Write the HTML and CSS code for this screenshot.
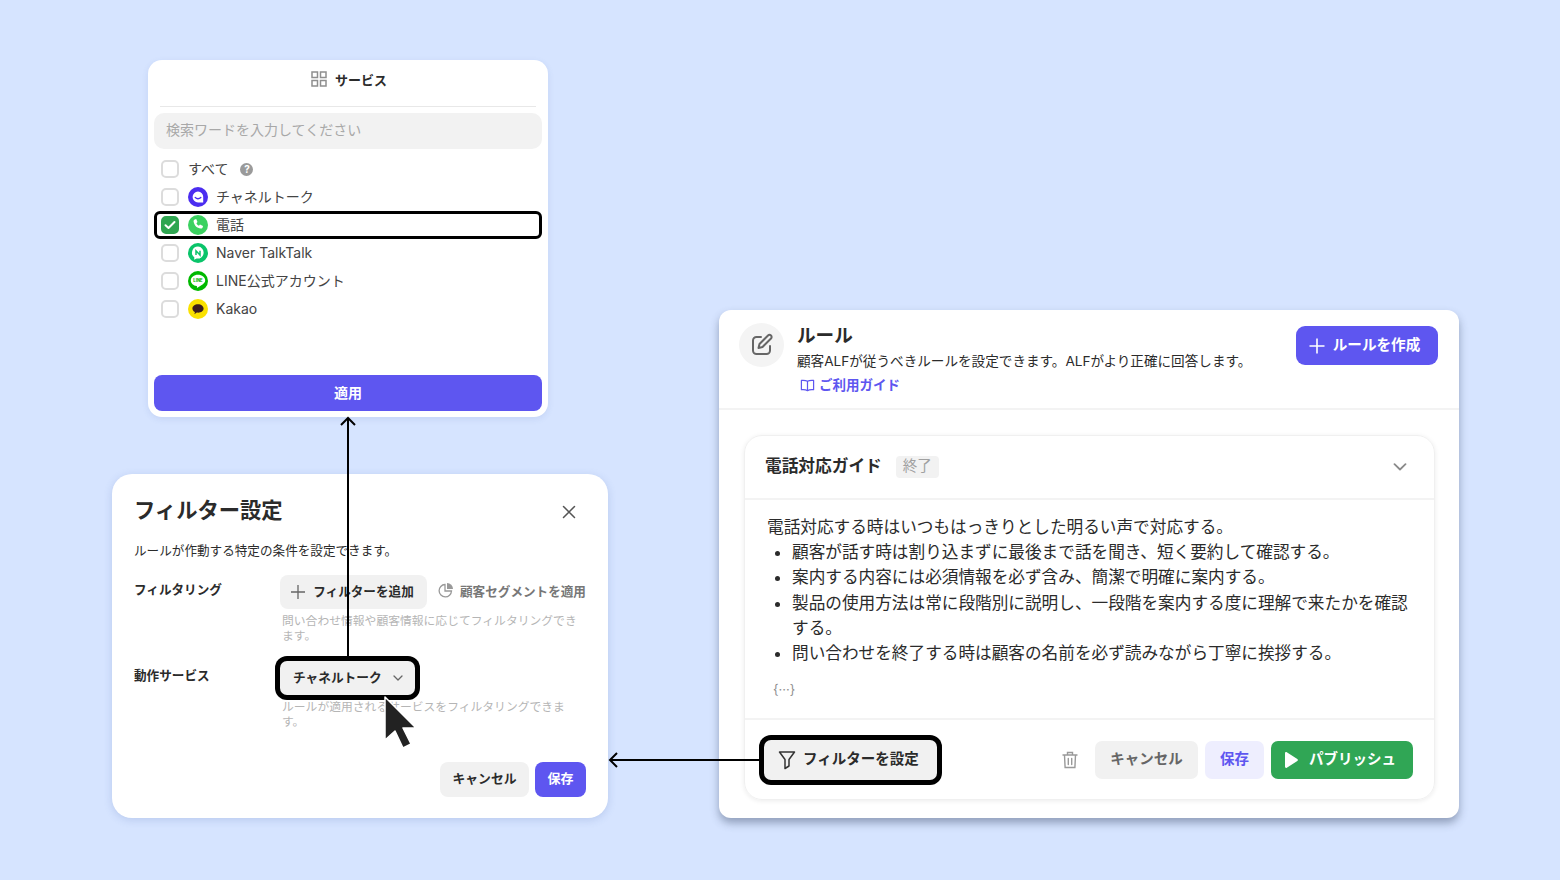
FILE: index.html
```html
<!DOCTYPE html>
<html lang="ja">
  <head>
    <meta charset="UTF-8" />
    <title>ルール フィルター設定</title>
    <link rel="stylesheet" href="styles.css">
  </head>
  <body>
    <div class="stage">
      <!-- service picker -->
      <section class="window service-card">
        <div class="service-head">
          <svg width="16" height="16" viewBox="0 0 16 16" fill="none" stroke="#8f8f8f" stroke-width="1.5"><rect x="1" y="1" width="5.5" height="5.5"/><rect x="9.5" y="1" width="5.5" height="5.5"/><rect x="1" y="9.5" width="5.5" height="5.5"/><rect x="9.5" y="9.5" width="5.5" height="5.5"/></svg>
          <span>サービス</span>
        </div>
        <div class="search">検索ワードを入力してください</div>
        <ul class="service-list">
          <li class="service-row">
            <span class="check"></span>
            <span class="service-name all-name">すべて</span>
            <span class="help">?</span>
          </li>
          <li class="service-row">
            <span class="check"></span>
            <svg class="brand" viewBox="0 0 20 20"><circle cx="10" cy="10" r="10" fill="#4b2df0"/><path d="M10 4.6a5.4 5.4 0 1 0 0 10.8h5.2v-5.4A5.2 5.2 0 0 0 10 4.6z" fill="#fff"/><path d="M7.2 10.4c1.5 1.7 4 1.7 5.6 0" fill="none" stroke="#4b2df0" stroke-width="1.4" stroke-linecap="round"/></svg>
            <span class="service-name">チャネルトーク</span>
          </li>
          <li class="service-row selected">
            <span class="check checked">
              <svg width="12" height="10" viewBox="0 0 12 10" fill="none" stroke="#fff" stroke-width="2" stroke-linecap="round" stroke-linejoin="round"><path d="M1.5 5.2 4.5 8l6-6"/></svg>
            </span>
            <svg class="brand" viewBox="0 0 20 20"><circle cx="10" cy="10" r="10" fill="#3bd160"/><path d="M6.9 4.4l1.3-.3 1.3 3-1.1 1.100c.5 1.200 1.300 2 2.500 2.500l1.100-1.100 3 1.300-.3 1.300c-.2.900-1 1.500-1.900 1.300C8.800 13 6.400 10.800 5.600 6.500c-.2-.9.400-1.900 1.300-2.100z" fill="#fff"/></svg>
            <span class="service-name">電話</span>
          </li>
          <li class="service-row">
            <span class="check"></span>
            <svg class="brand" viewBox="0 0 20 20"><circle cx="10" cy="10" r="10" fill="#0ac46a"/><path d="M10 3.600a6 6 0 0 0-3.600 10.800l-.3 2.300 2.500-1.200A6 6 0 1 0 10 3.600z" fill="#fff"/><path d="M8 12V7.800l4 4.200V7.800" fill="none" stroke="#0ac46a" stroke-width="1.500"/></svg>
            <span class="service-name">Naver TalkTalk</span>
          </li>
          <li class="service-row">
            <span class="check"></span>
            <svg class="brand" viewBox="0 0 20 20"><circle cx="10" cy="10" r="10" fill="#00b900"/><path d="M10 3.800c-4 0-7.200 2.500-7.200 5.700 0 2.800 2.500 5.100 5.900 5.600.5.100.3.800.2 1.400 0 .3.200.4.500.3 1.700-.9 5.500-3.200 6.900-5 .6-.7.900-1.500.9-2.300 0-3.200-3.200-5.700-7.200-5.700z" fill="#fff"/><text x="10" y="11.200" class="line-mark">LINE</text></svg>
            <span class="service-name">LINE公式アカウント</span>
          </li>
          <li class="service-row">
            <span class="check"></span>
            <svg class="brand" viewBox="0 0 20 20"><circle cx="10" cy="10" r="10" fill="#fae100"/><path d="M10 5.200c-3.200 0-5.600 1.900-5.600 4.300 0 1.500 1 2.900 2.500 3.600l-.5 2.100 2.400-1.600c.5.100 1 .1 1.300.1 3.100 0 5.500-1.900 5.500-4.200S13.200 5.200 10 5.200z" fill="#3c1e1e"/></svg>
            <span class="service-name">Kakao</span>
          </li>
        </ul>
        <button class="apply">適用</button>
      </section>

      <!-- filter settings dialog -->
      <section class="window filter-card">
        <div class="filter-head">
          <h2>フィルター設定</h2>
          <svg class="close-icon" width="16" height="16" viewBox="0 0 16 16" fill="none" stroke="#555" stroke-width="1.5" stroke-linecap="round"><path d="M2.500 2.500l11 11M13.500 2.500l-11 11"/></svg>
        </div>
        <p class="filter-desc">ルールが作動する特定の条件を設定できます。</p>
        <div class="filter-row">
          <div class="filter-label">フィルタリング</div>
          <div>
            <div class="filter-actions">
              <button class="soft-btn add-filter">
                <svg width="16" height="16" viewBox="0 0 16 16" fill="none" stroke="#666" stroke-width="1.3"><path d="M8 1v14M1 8h14"/></svg>
                フィルターを追加
              </button>
              <span class="segment">
                <svg width="16" height="16" viewBox="0 0 16 16"><path d="M7 2.500a6.200 6.200 0 1 0 6.500 6.500H7z" fill="none" stroke="#999" stroke-width="1.3"/><path d="M9 1a6 6 0 0 1 6 6H9z" fill="#999"/></svg>
                顧客セグメントを適用
              </span>
            </div>
            <p class="hint">問い合わせ情報や顧客情報に応じてフィルタリングできます。</p>
          </div>
        </div>
        <div class="filter-row">
          <div class="filter-label">動作サービス</div>
          <div>
            <button class="soft-btn select-btn marked">
              チャネルトーク
              <svg width="10" height="6" viewBox="0 0 10 6" fill="none" stroke="#666" stroke-width="1.3" stroke-linecap="round" stroke-linejoin="round"><path d="M1 1l4 4 4-4"/></svg>
            </button>
            <p class="hint select-hint">ルールが適用されるサービスをフィルタリングできます。</p>
          </div>
        </div>
        <div class="filter-foot">
          <button class="soft-btn cancel-small">キャンセル</button>
          <button class="save-small">保存</button>
        </div>
      </section>

      <!-- rule editor -->
      <section class="window rule-card">
        <header class="rule-head">
          <div class="rule-icon">
            <svg width="24" height="24" viewBox="0 0 24 24" fill="none" stroke="#666" stroke-width="2" stroke-linecap="round" stroke-linejoin="round"><path d="M11 4H6.500A3.500 3.500 0 0 0 3 7.500v10A3.500 3.500 0 0 0 6.500 21h10a3.500 3.500 0 0 0 3.500-3.500V13"/><path d="M18 2.500a2.100 2.100 0 0 1 3 3L12.500 14l-4 1 1-4z"/></svg>
          </div>
          <div class="rule-title">
            <h1>ルール</h1>
            <p>顧客ALFが従うべきルールを設定できます。ALFがより正確に回答します。</p>
            <a class="guide">
              <svg width="15" height="15" viewBox="0 0 16 16" fill="none" stroke="#5e56f0" stroke-width="1.3" stroke-linejoin="round"><path d="M8 3.500C6.500 2.500 4 2.300 1.500 2.500v10c2.500-.2 5 0 6.500 1 1.500-1 4-1.200 6.500-1v-10C12 2.300 9.500 2.500 8 3.500zM8 3.500v10"/></svg>
              ご利用ガイド
            </a>
          </div>
          <button class="create-btn">
            <svg width="18" height="18" viewBox="0 0 18 18" fill="none" stroke="#fff" stroke-width="1.6"><path d="M9 1.500v15M1.500 9h15"/></svg>
            ルールを作成
          </button>
        </header>

        <div class="rule-box">
          <div class="box-head">
            <h3>電話対応ガイド</h3>
            <span class="status">終了</span>
            <svg class="box-chevron" width="14" height="8" viewBox="0 0 14 8" fill="none" stroke="#8a8a8a" stroke-width="1.8" stroke-linecap="round" stroke-linejoin="round"><path d="M1.500 1.200 7 6.500l5.500-5.300"/></svg>
          </div>
          <div class="box-body">
            <p>電話対応する時はいつもはっきりとした明るい声で対応する。</p>
            <ul>
              <li>顧客が話す時は割り込まずに最後まで話を聞き、短く要約して確認する。</li>
              <li>案内する内容には必須情報を必ず含み、簡潔で明確に案内する。</li>
              <li>製品の使用方法は常に段階別に説明し、一段階を案内する度に理解で来たかを確認する。</li>
              <li>問い合わせを終了する時は顧客の名前を必ず読みながら丁寧に挨拶する。</li>
            </ul>
            <div class="variable">{···}</div>
          </div>
          <div class="box-foot">
            <button class="soft-btn filter-btn marked">
              <svg width="18" height="20" viewBox="0 0 18 20" fill="none" stroke="#333" stroke-width="1.5" stroke-linejoin="round"><path d="M1.500 2h15L11 9.500V16l-4 2.500v-9z"/></svg>
              フィルターを設定
            </button>
            <div class="foot-actions">
              <svg class="trash" width="16" height="18" viewBox="0 0 16 18" fill="none" stroke="#999" stroke-width="1.4" stroke-linecap="round"><path d="M1 4h14M5.500 4V1.500h5V4M2.500 4l.6 12.500h9.800L13.500 4M6.300 7.500v6M9.700 7.500v6"/></svg>
              <button class="soft-btn cancel-btn">キャンセル</button>
              <button class="save-btn">保存</button>
              <button class="publish-btn">
                <svg width="16" height="18" viewBox="0 0 16 18"><path d="M2 2.200c0-1 1-1.500 1.800-1l10.500 6.800c.8.500.8 1.500 0 2L3.800 16.800c-.8.500-1.800 0-1.800-1z" fill="#fff"/></svg>
                パブリッシュ
              </button>
            </div>
          </div>
        </div>
      </section>

      <!-- connectors between the windows -->
      <svg class="arrows" width="1560" height="880" fill="none" stroke="#000" stroke-width="2">
        <path d="M348 657V418M341 425l7-7 7 7"/>
        <path d="M760 760H610M617 753l-7 7 7 7"/>
      </svg>

      <svg class="cursor" width="34" height="56" viewBox="0 0 34 56">
        <path d="M3 2v43l10-9 8 17 8-4-8-16h13z" fill="#222" stroke="#fff" stroke-width="1.5" stroke-linejoin="round"/>
      </svg>
    </div>
  </body>
</html>
```

FILE: styles.css
```css
* {
  margin: 0;
  padding: 0;
  box-sizing: border-box;
  font-family: Inter, "Noto Sans CJK JP", sans-serif;
}

body {
  background-color: #d6e4ff;
  color: #2b2b2b;
}

/* the CJK font sits low in its line box, so labels are lifted and icons put back */
button {
  border: none;
  cursor: pointer;
  padding-bottom: 4px;
}

button svg {
  margin-top: 4px;
}

ul {
  list-style: none;
}

.stage {
  position: relative;
  width: 1560px;
  height: 880px;
  overflow: hidden;
}

.window {
  position: absolute;
  background-color: white;
}

/* service picker */
.service-card {
  left: 148px;
  top: 60px;
  width: 400px;
  height: 357px;
  border-radius: 14px;
  padding: 0 6px 6px;
  display: flex;
  flex-direction: column;
  box-shadow: 0 2px 6px rgba(70, 100, 170, 0.12);
}

.service-head {
  height: 47px;
  margin: 0 6px;
  display: flex;
  justify-content: center;
  align-items: center;
  gap: 8px;
  font-size: 13px;
  font-weight: 700;
  border-bottom: 1px solid #e8e8e8;
  padding-bottom: 8px;
  padding-left: 2px;
}

.search {
  height: 36px;
  margin-top: 6px;
  padding-left: 12px;
  background-color: #f2f2f2;
  border-radius: 10px;
  color: #a8a8a8;
  font-size: 14px;
  line-height: 34px;
}

.service-list {
  margin-top: 6px;
  flex: 1;
}

.service-row {
  height: 28px;
  display: flex;
  align-items: center;
  padding-left: 7px;
  font-size: 14px;
  color: #444;
}

.service-row.selected {
  border: 3px solid #000;
  border-radius: 6px;
  padding-left: 4px;
}

.service-name {
  margin-bottom: 2px;
}

.check {
  width: 18px;
  height: 18px;
  margin-right: 9px;
  border: 2px solid #dcdcdc;
  border-radius: 5px;
  display: flex;
  justify-content: center;
  align-items: center;
}

.check.checked {
  background-color: #2fa551;
  border-color: #2fa551;
}

.brand {
  width: 20px;
  height: 20px;
  margin-right: 8px;
}

.line-mark {
  font-family: Inter, sans-serif;
  font-size: 4.2px;
  font-weight: 800;
  fill: #00b900;
  text-anchor: middle;
}

.all-name {
  margin-right: 12px;
}

.help {
  width: 13px;
  height: 13px;
  border-radius: 50%;
  background-color: #9a9a9a;
  color: white;
  font-size: 10px;
  font-weight: 700;
  line-height: 13px;
  text-align: center;
}

.apply {
  height: 36px;
  background-color: #5e56f0;
  color: white;
  border-radius: 8px;
  font-size: 14px;
  font-weight: 600;
  padding-bottom: 2px;
}

/* filter dialog */
.filter-card {
  left: 112px;
  top: 474px;
  width: 496px;
  height: 344px;
  border-radius: 20px;
  padding: 20px 22px;
  box-shadow: 0 2px 8px rgba(70, 100, 170, 0.2);
}

.filter-head {
  display: flex;
  justify-content: space-between;
  align-items: center;
  height: 32px;
  padding-right: 9px;
}

.filter-head h2 {
  font-size: 21.3px;
  font-weight: 700;
  line-height: 32px;
}

.close-icon {
  margin-top: 4px;
}

.filter-desc {
  margin-top: 15px;
  font-size: 12.6px;
  line-height: 20px;
}

.filter-row {
  display: grid;
  grid-template-columns: 146px 1fr;
  margin-top: 14px;
}

.filter-row + .filter-row {
  margin-top: 17px;
}

.filter-label {
  padding-top: 6px;
  font-size: 12.6px;
  font-weight: 700;
  line-height: 18px;
}

.filter-actions {
  display: flex;
  align-items: center;
  gap: 11px;
}

.soft-btn {
  background-color: #f1f1f1;
  color: #2b2b2b;
  font-weight: 600;
}

.add-filter {
  width: 147px;
  height: 34px;
  padding-right: 3px;
  border-radius: 8px;
  font-size: 12.6px;
  display: flex;
  align-items: center;
  justify-content: center;
  gap: 7px;
}

.segment {
  display: flex;
  align-items: center;
  gap: 6px;
  padding-bottom: 4px;
  font-size: 12.6px;
  font-weight: 600;
  color: #777;
  white-space: nowrap;
}

.hint {
  margin: 5px 4px 0 2px;
  font-size: 11.8px;
  line-height: 15px;
  color: #b5b5b5;
}

.select-btn {
  width: 135px;
  height: 34px;
  border-radius: 7px;
  font-size: 12.7px;
  display: flex;
  align-items: center;
  gap: 11px;
  padding-left: 13px;
}

.marked {
  box-shadow: 0 0 0 5px #000;
}

.select-hint {
  margin-top: 5px;
}

.filter-foot {
  position: absolute;
  right: 22px;
  bottom: 21px;
  display: flex;
  gap: 6px;
}

.cancel-small {
  width: 89px;
  height: 35px;
  border-radius: 8px;
  font-size: 12.8px;
}

.save-small {
  width: 51px;
  height: 35px;
  border-radius: 8px;
  background-color: #5e56f0;
  color: white;
  font-size: 13px;
  font-weight: 600;
}

/* rule editor */
.rule-card {
  left: 719px;
  top: 310px;
  width: 740px;
  height: 508px;
  border-radius: 12px;
  box-shadow: 0 5px 8px rgba(60, 75, 105, 0.45);
}

.rule-head {
  height: 100px;
  display: flex;
  align-items: flex-start;
  padding: 13px 21px 0 20px;
  border-bottom: 2px solid #f3f3f3;
}

.rule-icon {
  width: 45px;
  height: 44px;
  border-radius: 50%;
  background-color: #f4f4f4;
  display: flex;
  justify-content: center;
  align-items: center;
  margin-right: 13px;
}

.rule-title {
  flex: 1;
  font-family: "Noto Sans CJK JP", sans-serif;
}

.rule-title h1 {
  font-size: 18.6px;
  font-weight: 700;
  line-height: 24px;
}

.rule-title p {
  margin-top: 3px;
  font-size: 13.6px;
  line-height: 22px;
}

.guide {
  margin: 2px 0 0 3px;
  display: flex;
  align-items: center;
  gap: 4px;
  font-size: 13.5px;
  font-weight: 700;
  line-height: 22px;
  color: #5e56f0;
}

.create-btn {
  width: 142px;
  height: 39px;
  margin-top: 3px;
  padding-right: 6px;
  border-radius: 9px;
  background-color: #5e56f0;
  color: white;
  font-size: 14.6px;
  font-weight: 600;
  display: flex;
  justify-content: center;
  align-items: center;
  gap: 7px;
}

.rule-box {
  margin: 25px 24px 0 25px;
  height: 365px;
  border: 1px solid #f0f0f0;
  border-radius: 18px;
  box-shadow: 0 1px 5px rgba(0, 0, 0, 0.08);
  display: flex;
  flex-direction: column;
}

.box-head {
  height: 64px;
  display: flex;
  align-items: center;
  padding: 0 27px 0 20px;
  border-bottom: 2px solid #f3f3f3;
}

.box-head h3 {
  margin-bottom: 4px;
  font-size: 16.7px;
  font-weight: 700;
}

.status {
  margin-left: 14px;
  padding: 0 7px;
  height: 22px;
  line-height: 20px;
  border-radius: 4px;
  background-color: #f2f2f2;
  color: #a0a0a0;
  font-size: 14.5px;
}

.box-chevron {
  margin-left: auto;
}

.box-body {
  flex: 1;
  padding: 15px 21px 0 22px;
  font-size: 16.65px;
  line-height: 25.2px;
  color: #2b2b2b;
}

.box-body ul {
  list-style: disc;
  padding-left: 25px;
}

.variable {
  margin: 14px 0 0 6px;
  font-size: 13px;
  line-height: 18px;
  color: #8f8f8f;
}

.box-foot {
  height: 81px;
  display: flex;
  justify-content: space-between;
  align-items: center;
  padding: 0 21px 0 19px;
  border-top: 2px solid #f3f3f3;
}

.filter-btn {
  width: 173px;
  height: 40px;
  border-radius: 7px;
  font-size: 14.5px;
  display: flex;
  align-items: center;
  gap: 7px;
  padding-left: 14px;
  box-shadow: 0 0 0 5px #000;
}

.foot-actions {
  display: flex;
  align-items: center;
  gap: 7px;
}

.trash {
  margin-right: 10px;
}

.foot-actions button {
  height: 38px;
  border-radius: 7px;
  font-size: 14.5px;
  font-weight: 600;
}

.cancel-btn {
  width: 103px;
  color: #666;
}

.save-btn {
  width: 59px;
  background-color: #eeeefe;
  color: #5e56f0;
}

.publish-btn {
  width: 142px;
  padding-left: 12px;
  background-color: #30a655;
  color: white;
  display: flex;
  align-items: center;
  gap: 10px;
}

/* overlay */
.arrows {
  position: absolute;
  left: 0;
  top: 0;
  pointer-events: none;
}

.cursor {
  position: absolute;
  left: 382px;
  top: 695px;
}
```
